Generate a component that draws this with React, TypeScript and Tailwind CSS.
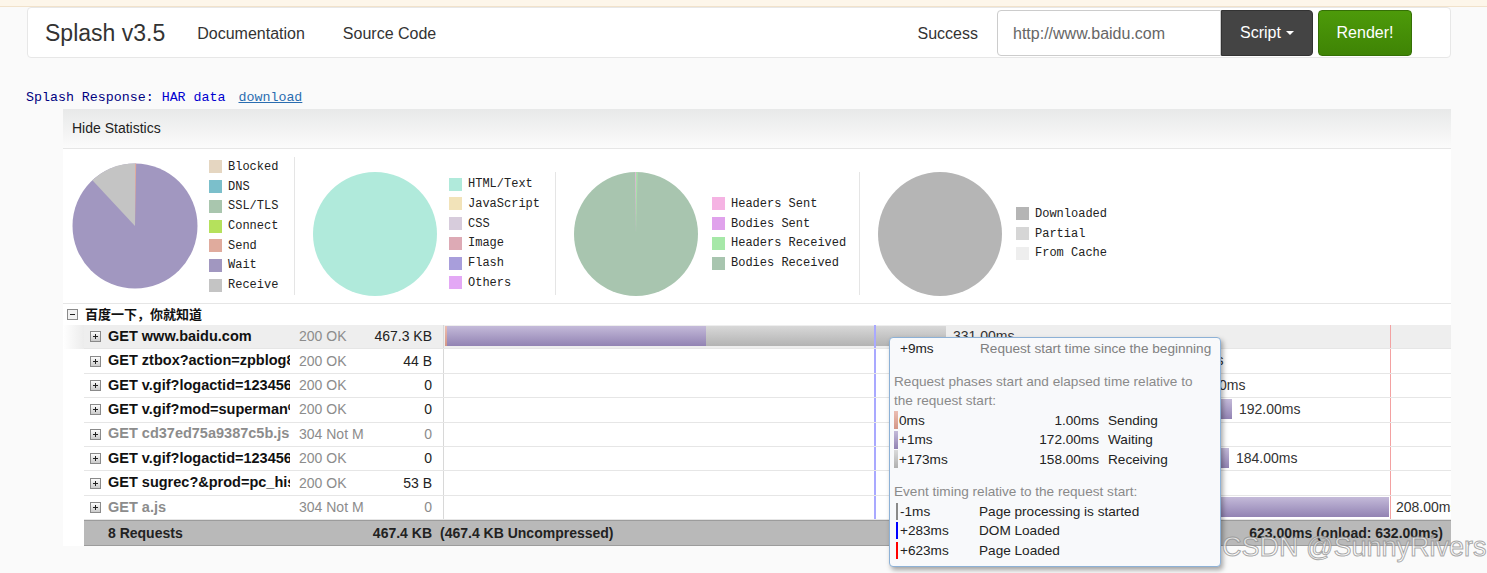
import React from "react";

/* ===================== TYPES ===================== */

type LegendItem = { label: string; color: string };

type Part = { w: number; kind: "send" | "wait" | "receive" };

type Entry = {
  url: string;
  status: string;
  size: string;
  cached?: boolean;
  hover?: boolean;
  start: number;
  parts: Part[];
  label: string;
};

/* ===================== DATA ===================== */

const timingLegend: LegendItem[] = [
  { label: "Blocked", color: "#e5d6c1" },
  { label: "DNS", color: "#7bbfcb" },
  { label: "SSL/TLS", color: "#a9c6ae" },
  { label: "Connect", color: "#b5e15c" },
  { label: "Send", color: "#e0ab9d" },
  { label: "Wait", color: "#a197c0" },
  { label: "Receive", color: "#c4c4c4" },
];

const typeLegend: LegendItem[] = [
  { label: "HTML/Text", color: "#b0eadb" },
  { label: "JavaScript", color: "#f2e3b9" },
  { label: "CSS", color: "#d7ccdc" },
  { label: "Image", color: "#ddaab5" },
  { label: "Flash", color: "#a89edb" },
  { label: "Others", color: "#e3a8f5" },
];

const trafficLegend: LegendItem[] = [
  { label: "Headers Sent", color: "#f5b3e3" },
  { label: "Bodies Sent", color: "#e0a2ec" },
  { label: "Headers Received", color: "#a6e8a8" },
  { label: "Bodies Received", color: "#a8c5af" },
];

const cacheLegend: LegendItem[] = [
  { label: "Downloaded", color: "#b5b5b5" },
  { label: "Partial", color: "#d6d6d6" },
  { label: "From Cache", color: "#eeeeee" },
];

const entries: Entry[] = [
  {
    url: "GET www.baidu.com",
    status: "200 OK",
    size: "467.3 KB",
    hover: true,
    start: 1,
    parts: [
      { w: 2, kind: "send" },
      { w: 259, kind: "wait" },
      { w: 240, kind: "receive" },
    ],
    label: "331.00ms",
  },
  {
    url: "GET ztbox?action=zpblog8&v=1",
    status: "200 OK",
    size: "44 B",
    start: 552,
    parts: [{ w: 159, kind: "wait" }],
    label: "106.00ms",
  },
  {
    url: "GET v.gif?logactid=1234567890",
    status: "200 OK",
    size: "0",
    start: 503,
    parts: [{ w: 230, kind: "wait" }],
    label: "153.00ms",
  },
  {
    url: "GET v.gif?mod=superman%3Acomponents",
    status: "200 OK",
    size: "0",
    start: 500,
    parts: [{ w: 288, kind: "wait" }],
    label: "192.00ms",
  },
  {
    url: "GET cd37ed75a9387c5b.js",
    status: "304 Not Modified",
    size: "0",
    cached: true,
    start: 480,
    parts: [{ w: 30, kind: "wait" }],
    label: "24.00ms",
  },
  {
    url: "GET v.gif?logactid=1234567890",
    status: "200 OK",
    size: "0",
    start: 509,
    parts: [{ w: 276, kind: "wait" }],
    label: "184.00ms",
  },
  {
    url: "GET sugrec?&prod=pc_his&from=pc_web",
    status: "200 OK",
    size: "53 B",
    start: 490,
    parts: [{ w: 60, kind: "wait" }],
    label: "53.00ms",
  },
  {
    url: "GET a.js",
    status: "304 Not Modified",
    size: "0",
    cached: true,
    start: 633,
    parts: [{ w: 312, kind: "wait" }],
    label: "208.00ms",
  },
];

const partClass: Record<Part["kind"], string> = {
  send: "bg-linear-to-b from-[#ebbdb2] to-[#d49686]",
  wait: "bg-linear-to-b from-[#c4bad9] to-[#9283b3]",
  receive: "bg-linear-to-b from-[#d8d8d8] to-[#b3b3b3]",
};

/* ===================== PIECES ===================== */

function Legend({ items }: { items: LegendItem[] }) {
  return (
    <div className="flex flex-col font-['Liberation_Mono','Courier_New',monospace] text-[12px] text-[#222]">
      {items.map((it) => (
        <div key={it.label} className="flex items-center h-[19.7px]">
          <span className="w-[13px] h-[13px]" style={{ background: it.color }} />
          <span className="ml-[6px] whitespace-nowrap">{it.label}</span>
        </div>
      ))}
    </div>
  );
}

function TimingPie() {
  return (
    <svg width="126" height="126" viewBox="0 0 126 126">
      <circle cx="63" cy="63" r="62.5" fill="#a197c0" />
      <path d="M63 63 L63 0.5 A62.5 62.5 0 0 0 20.4 17.3 Z" fill="#c4c4c4" />
      <path d="M63 63 L63 0.5 A62.5 62.5 0 0 1 64.2 0.5 Z" fill="#e0ab9d" />
    </svg>
  );
}

function FlatPie({ color, children }: { color: string; children?: React.ReactNode }) {
  return (
    <svg width="124" height="124" viewBox="0 0 124 124">
      <circle cx="62" cy="62" r="62" fill={color} />
      {children}
    </svg>
  );
}

function PlusIcon() {
  return (
    <svg width="11" height="11" viewBox="0 0 11 11">
      <defs>
        <linearGradient id="pg" x1="0" y1="0" x2="0" y2="1">
          <stop offset="0" stopColor="#ffffff" />
          <stop offset="1" stopColor="#c8c8c8" />
        </linearGradient>
      </defs>
      <rect x="0.5" y="0.5" width="10" height="10" fill="url(#pg)" stroke="#8a8a8a" />
      <path d="M3 5.5 H8 M5.5 3 V8" stroke="#222" strokeWidth="1" />
    </svg>
  );
}

function MinusIcon() {
  return (
    <svg width="11" height="11" viewBox="0 0 11 11">
      <rect x="0.5" y="0.5" width="10" height="10" fill="#f2f2f2" stroke="#8a8a8a" />
      <path d="M3 5.5 H8" stroke="#222" strokeWidth="1" />
    </svg>
  );
}

function Row({ e }: { e: Entry }) {
  const textColor = e.cached ? "text-[#8c8c8c]" : "text-[#111]";
  const end = e.start + e.parts.reduce((s, p) => s + p.w, 0);

  return (
    <div className="flex h-[24.4px]">
      <div
        className={
          e.hover
            ? "w-[21px] bg-linear-to-r from-white to-[#ececec]"
            : "w-[21px]"
        }
      />
      <div
        className={`flex-1 flex items-center border-b border-[#e6e6e6] text-[14px] ${
          e.hover ? "bg-[#eeeeee]" : "bg-white"
        }`}
      >
        <div className="w-[24px] h-full flex items-center pl-[6px]">
          <PlusIcon />
        </div>
        <div className={`w-[182px] overflow-hidden whitespace-nowrap font-bold text-[14.5px] ${textColor}`}>
          {e.url}
        </div>
        <div className="w-[74px] pl-[9px] overflow-hidden whitespace-nowrap text-[#8c8c8c]">
          {e.status}
        </div>
        <div className={`w-[68px] text-right whitespace-nowrap ${e.cached ? "text-[#8c8c8c]" : "text-[#222]"}`}>
          {e.size}
        </div>
        <div className="w-[11px]" />
        <div className="relative flex-1 h-full border-l border-[#d8d8d8] overflow-hidden">
          <div className="absolute top-[1px] h-[20px] flex" style={{ left: e.start }}>
            {e.parts.map((p, i) => (
              <div key={i} className={`h-full ${partClass[p.kind]}`} style={{ width: p.w }} />
            ))}
          </div>
          <span
            className="absolute top-0 leading-[23px] text-[#333] whitespace-nowrap"
            style={{ left: end + 7 }}
          >
            {e.label}
          </span>
          <div className="absolute top-0 bottom-0 left-[430px] w-[2px] bg-[#a9a9ff]" />
          <div className="absolute top-0 bottom-0 left-[946px] w-[1px] bg-[#f3a1a1]" />
        </div>
      </div>
    </div>
  );
}

function Tooltip() {
  return (
    <div className="absolute left-[889px] top-[337px] w-[332px] h-[230px] rounded-[4px] border border-[#8db1d6] bg-[#f8f9fb] shadow-[2px_3px_5px_rgba(0,0,0,0.35)] text-[13.6px] leading-[19.5px] text-[#222] z-10">
      <div className="flex pl-[10px] pt-[1px] whitespace-nowrap">
        <span className="w-[80px]">+9ms</span>
        <span className="text-[#808080]">Request start time since the beginning</span>
      </div>

      <div className="pl-[4px] mt-[13px] text-[#8a8a8a] whitespace-nowrap">
        Request phases start and elapsed time relative to
        <br />
        the request start:
      </div>
      {[
        { at: "0ms", dur: "1.00ms", name: "Sending", c: "bg-linear-to-b from-[#ebbdb2] to-[#d49686]" },
        { at: "+1ms", dur: "172.00ms", name: "Waiting", c: "bg-linear-to-b from-[#c4bad9] to-[#9283b3]" },
        { at: "+173ms", dur: "158.00ms", name: "Receiving", c: "bg-linear-to-b from-[#dadada] to-[#b0b0b0]" },
      ].map((p) => (
        <div key={p.name} className="flex items-center pl-[4px] h-[19.5px]">
          <span className={`w-[4px] h-[18px] ${p.c}`} />
          <span className="w-[100px] pl-[1px]">{p.at}</span>
          <span className="w-[101px] text-right">{p.dur}</span>
          <span className="pl-[9px]">{p.name}</span>
        </div>
      ))}

      <div className="pl-[4px] mt-[13px] text-[#8a8a8a]">
        Event timing relative to the request start:
      </div>
      {[
        { at: "-1ms", name: "Page processing is started", c: "bg-[#8a8a8a]" },
        { at: "+283ms", name: "DOM Loaded", c: "bg-[#0000ff]" },
        { at: "+623ms", name: "Page Loaded", c: "bg-[#ff0000]" },
      ].map((ev) => (
        <div key={ev.name} className="flex items-center pl-[6px] h-[19.5px]">
          <span className={`w-[2px] h-[17px] ${ev.c}`} />
          <span className="w-[81px] pl-[2px]">{ev.at}</span>
          <span>{ev.name}</span>
        </div>
      ))}
    </div>
  );
}

/* ===================== PAGE ===================== */

export default function App() {
  return (
    <div className="relative min-h-[573px] bg-[#fafafa] font-['Liberation_Sans',Arial,'Noto_Sans_CJK_SC',sans-serif] overflow-hidden">
      <div className="h-[7px] bg-[#fdf6ea] border-b border-[#f1e2cb]" />

      {/* navbar */}
      <nav className="ml-[27px] w-[1424px] h-[51px] pt-[2px] border border-[#e7e7e7] rounded-[4px] bg-white flex items-center text-[#333]">
        <span className="pl-[17px] text-[23px]">Splash v3.5</span>
        <span className="ml-[32px] text-[16px]">Documentation</span>
        <span className="ml-[38px] text-[16px]">Source Code</span>

        <div className="ml-auto flex items-center pr-[38px] -mt-[2px]">
          <span className="text-[16px] pt-[2px]">Success</span>
          <div className="ml-[19px] w-[224px] h-[46px] border border-[#ccc] rounded-l-[4px] bg-white flex items-center pl-[15px] pt-[2px] text-[16px] text-[#666]">
            http://www.baidu.com
          </div>
          <button className="w-[92px] h-[46px] rounded-r-[4px] bg-[#444] border border-[#333] text-white text-[16px] flex items-center justify-center gap-[5px]">
            Script
            <span className="w-0 h-0 border-x-[4px] border-t-[4px] border-x-transparent border-t-white" />
          </button>
          <button className="ml-[5px] w-[94px] h-[46px] rounded-[4px] bg-linear-to-b from-[#4d9a0a] to-[#3f8405] border border-[#357006] text-white text-[16px]">
            Render!
          </button>
        </div>
      </nav>

      {/* response line */}
      <div className="ml-[26px] mt-[32px] h-[16px] leading-[16px] font-['Liberation_Mono','Courier_New',monospace] text-[13.3px] whitespace-nowrap">
        <span className="text-[#000080]">Splash Response: </span>
        <span className="text-[#0000d0]">HAR data</span>
        <span className="ml-[13px] text-[#2a6db0] underline">download</span>
      </div>

      {/* HAR viewer */}
      <div className="ml-[63px] mt-[3px] w-[1388px] bg-white">
        <div className="h-[40px] pl-[9px] flex items-center bg-linear-to-b from-[#e8e9e9] to-[#fbfbfb] border-b border-[#e6e6e6] text-[14px] text-[#222]">
          Hide Statistics
        </div>

        <div className="h-[155px] pt-[8px] flex border-b border-[#e6e6e6]">
          <div className="w-[232px] h-[138px] border-r border-[#e5e5e5] flex items-center pl-[9px]">
            <TimingPie />
            <div className="ml-[11px]">
              <Legend items={timingLegend} />
            </div>
          </div>
          <div className="w-[261px] h-[123px] mt-[15px] border-r border-[#e5e5e5] flex items-center pl-[18px]">
            <FlatPie color="#b0eadb" />
            <div className="ml-[12px]">
              <Legend items={typeLegend} />
            </div>
          </div>
          <div className="w-[304px] h-[123px] mt-[15px] border-r border-[#e5e5e5] flex items-center pl-[18px]">
            <FlatPie color="#a8c5af">
              <path d="M62 62 L61.3 0 L62.3 0 Z" fill="#f5b3e3" />
              <path d="M62 62 L62.3 0 L63.6 0 Z" fill="#a6e8a8" />
            </FlatPie>
            <div className="ml-[14px]">
              <Legend items={trafficLegend} />
            </div>
          </div>
          <div className="flex-1 h-[123px] mt-[15px] flex items-center pl-[18px]">
            <FlatPie color="#b5b5b5" />
            <div className="ml-[14px]">
              <Legend items={cacheLegend} />
            </div>
          </div>
        </div>

        {/* page group */}
        <div className="h-[21px] flex items-center pl-[4px] text-[13px] font-bold text-[#111]">
          <MinusIcon />
          <span className="ml-[7px]">百度一下，你就知道</span>
        </div>

        {entries.map((e, i) => (
          <Row key={i} e={e} />
        ))}

        <div className="flex h-[26px]">
          <div className="w-[21px] bg-white" />
          <div className="flex-1 flex items-center bg-[#b9b9b9] border-y border-[#9c9c9c] text-[14px] font-bold text-[#222] whitespace-nowrap">
            <span className="w-[24px]" />
            <span className="w-[182px]">8 Requests</span>
            <span className="w-[142px] text-right">467.4 KB</span>
            <span className="pl-[8px]">(467.4 KB Uncompressed)</span>
            <span className="ml-auto pr-[8px]">623.00ms (onload: 632.00ms)</span>
          </div>
        </div>
      </div>

      <Tooltip />

      <span className="absolute left-[1222px] top-[527px] z-20 text-[27px] text-white/60 [-webkit-text-stroke:1px_rgba(140,140,140,0.75)] whitespace-nowrap">
        CSDN @SunnyRivers
      </span>
    </div>
  );
}
